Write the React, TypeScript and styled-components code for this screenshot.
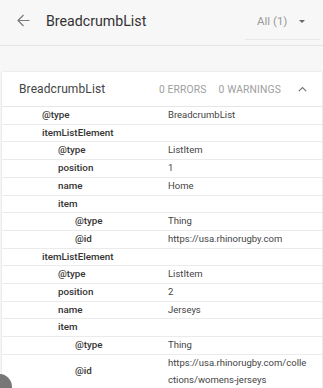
import React from "react";
import styled, { createGlobalStyle } from "styled-components";

const Global = createGlobalStyle`
  html, body { margin: 0; padding: 0; }
  body {
    background: #f7f7f7;
    font-family: Roboto, "Liberation Sans", Arial, sans-serif;
    width: 323px;
    height: 388px;
    overflow: hidden;
  }
`;

const Page = styled.div`
  position: relative;
  width: 323px;
  height: 388px;
  overflow: hidden;
  background: #f7f7f7;
`;

const TopBar = styled.header`
  height: 46px;
  display: flex;
  align-items: center;
  border-bottom: 1px solid #e4e4e4;
  box-sizing: border-box;
  padding-left: 16px;
  padding-right: 3px;
`;

const BackButton = styled.button`
  border: 0;
  background: none;
  padding: 0;
  width: 14px;
  height: 14px;
  display: flex;
  align-items: center;
  justify-content: center;
  color: #777;
  margin-right: 16px;
  margin-top: -4px;
`;

const Title = styled.h1`
  margin: 0;
  font-size: 14.2px;
  font-weight: 400;
  color: #333;
  flex: 1;
  margin-top: -4px;
`;

const Filter = styled.div`
  width: 75px;
  height: 32px;
  box-sizing: border-box;
  border-bottom: 1px solid #e8e8e8;
  display: flex;
  align-items: center;
  padding-left: 12px;
  padding-right: 15px;
  margin-top: 3px;
  color: #9a9a9a;
  font-size: 11.5px;
`;

const FilterLabel = styled.span`
  flex: 1;
  margin-top: -6px;
`;

const Caret = styled.span`
  width: 0;
  height: 0;
  border-left: 3.5px solid transparent;
  border-right: 3.5px solid transparent;
  border-top: 3.5px solid #666;
  margin-top: -5px;
`;

const Card = styled.section`
  margin: 26px 1px 0 2px;
  background: #fff;
  box-shadow: 0 0 2px rgba(0, 0, 0, 0.12), 0 1px 1px rgba(0, 0, 0, 0.06);
`;

const CardHeader = styled.div`
  height: 35px;
  box-sizing: border-box;
  display: flex;
  align-items: center;
  padding-left: 17px;
  padding-right: 15px;
  border-bottom: 1px solid #e6e6e6;
`;

const CardTitle = styled.div`
  flex: 1;
  font-size: 12px;
  color: #444;
  letter-spacing: 0.1px;
`;

const Count = styled.span<{ $gap?: number }>`
  font-size: 10.3px;
  color: #9e9e9e;
  letter-spacing: 0.15px;
  margin-left: ${(p) => p.$gap ?? 0}px;
`;

const Chevron = styled.span`
  display: flex;
  margin-left: 17px;
  color: #777;
`;

const Row = styled.div`
  display: grid;
  grid-template-columns: 166px 1fr;
  align-items: center;
  border-bottom: 1px solid #ebebeb;
  font-size: 9.5px;
  line-height: 16.7px;
`;

const indent = [0, 40, 56, 73];

const Key = styled.div<{ $level: number }>`
  padding-left: ${(p) => indent[p.$level]}px;
  font-weight: 500;
  font-size: 9.8px;
  color: #333;
`;

const Value = styled.div`
  color: #444;
  padding-right: 12px;
  word-break: break-all;
`;

const Blob = styled.div`
  position: absolute;
  left: -14px;
  top: 374px;
  width: 26px;
  height: 26px;
  border-radius: 50%;
  background: #777;
`;

type Item = { level: number; k: string; v?: string };

const rows: Item[] = [
  { level: 1, k: "@type", v: "BreadcrumbList" },
  { level: 1, k: "itemListElement" },
  { level: 2, k: "@type", v: "ListItem" },
  { level: 2, k: "position", v: "1" },
  { level: 2, k: "name", v: "Home" },
  { level: 2, k: "item" },
  { level: 3, k: "@type", v: "Thing" },
  { level: 3, k: "@id", v: "https://usa.rhinorugby.com" },
  { level: 1, k: "itemListElement" },
  { level: 2, k: "@type", v: "ListItem" },
  { level: 2, k: "position", v: "2" },
  { level: 2, k: "name", v: "Jerseys" },
  { level: 2, k: "item" },
  { level: 3, k: "@type", v: "Thing" },
  { level: 3, k: "@id", v: "https://usa.rhinorugby.com/collections/womens-jerseys" },
];

export default function App() {
  return (
    <Page>
      <Global />
      <TopBar>
        <BackButton aria-label="Back">
          <svg width="13" height="13" viewBox="0 0 13 13" fill="none" stroke="#7a7a7a" strokeWidth="1.2">
            <path d="M12.5 6.5H1M6.5 1L1 6.5l5.5 5.5" />
          </svg>
        </BackButton>
        <Title>BreadcrumbList</Title>
        <Filter>
          <FilterLabel>All (1)</FilterLabel>
          <Caret />
        </Filter>
      </TopBar>
      <Card>
        <CardHeader>
          <CardTitle>BreadcrumbList</CardTitle>
          <Count>0 ERRORS</Count>
          <Count $gap={12}>0 WARNINGS</Count>
          <Chevron>
            <svg width="9" height="6" viewBox="0 0 9 6" fill="none" stroke="#777" strokeWidth="1.2">
              <path d="M0.8 5.2L4.5 1.5l3.7 3.7" />
            </svg>
          </Chevron>
        </CardHeader>
        {rows.map((r, i) => (
          <Row key={i}>
            <Key $level={r.level}>{r.k}</Key>
            <Value>{r.v ?? ""}</Value>
          </Row>
        ))}
      </Card>
      <Blob />
    </Page>
  );
}
